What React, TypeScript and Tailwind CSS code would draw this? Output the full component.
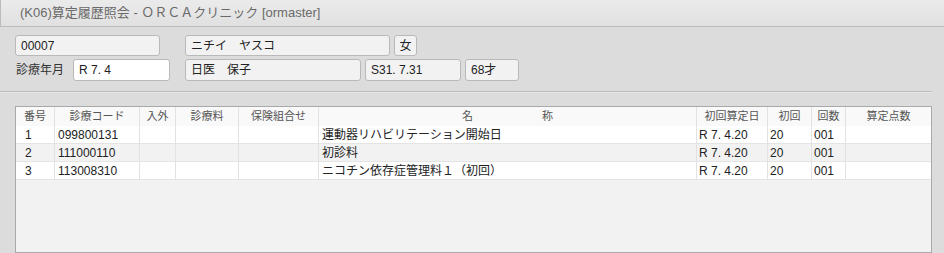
const font = { fontFamily: '"Liberation Sans", "Noto Sans CJK JP", sans-serif' };

const cols = 'grid grid-cols-[39px_85px_36px_63px_80px_378px_71px_44px_34px_1fr]';

const rows = [
  { no: '1', code: '099800131', name: '運動器リハビリテーション開始日', date: 'R 7. 4.20', first: '20', count: '001' },
  { no: '2', code: '111000110', name: '初診料', date: 'R 7. 4.20', first: '20', count: '001' },
  { no: '3', code: '113008310', name: 'ニコチン依存症管理料１（初回）', date: 'R 7. 4.20', first: '20', count: '001' },
];

function Field({ w, value, white }: { w: string; value: string; white?: boolean }) {
  return (
    <div className={`${w} h-full flex items-center px-[5px] rounded-[3px] border border-[#b9b9b9] ${white ? 'bg-white' : 'bg-[#f2f2f2]'} text-[12px] text-[#222] whitespace-pre`}>
      {value}
    </div>
  );
}

export default function App() {
  return (
    <div className="w-[944px] h-[253px] bg-[#dcdcdc] flex flex-col overflow-hidden" style={font}>
      {/* title bar */}
      <div className="h-[27px] shrink-0 flex items-center pl-[19px] bg-gradient-to-b from-[#ebebeb] to-[#e0e0e0] border-b border-l border-[#bcbcbc] text-[13px] text-[#6a6a6a]">
        (K06)算定履歴照会 - ＯＲＣＡクリニック [ormaster]
      </div>

      {/* patient info */}
      <div className="mt-[8px] h-[21px] flex pl-[15px] shrink-0">
        <Field w="w-[145px]" value="00007" />
        <div className="ml-[25px]"><Field w="w-[205px]" value="ニチイ　ヤスコ" /></div>
        <div className="ml-[4px] w-[23px] h-full flex items-center justify-center rounded-[3px] border border-[#b9b9b9] bg-[#f2f2f2] text-[12px] text-[#222]">女</div>
      </div>
      <div className="mt-[3px] h-[22px] flex pl-[16px] shrink-0">
        <div className="w-[57px] flex items-center text-[12px] text-[#333]">診療年月</div>
        <Field w="w-[97px]" value="R 7. 4" white />
        <div className="ml-[15px]"><Field w="w-[176px]" value="日医　保子" /></div>
        <div className="ml-[4px]"><Field w="w-[96px]" value="S31. 7.31" /></div>
        <div className="ml-[4px]"><Field w="w-[54px]" value="68才" /></div>
      </div>

      <div className="mt-[10px] w-[932px] h-[2px] shrink-0 border-t border-[#bdbdbd] border-b border-b-[#e6e6e6]" />

      {/* table */}
      <div className="mt-[13px] ml-[15px] w-[917px] flex-1 flex flex-col border border-[#a9a9a9] bg-[#f2f2f2] text-[12px] text-[#222]">
        <div className={`${cols} h-[19px] bg-[#f9f9f9] text-[11px] text-[#555]`}>
          {['番号', '診療コード', '入外', '診療料', '保険組合せ'].map((h) => (
            <div key={h} className="flex items-center justify-center border-r border-[#e2e2e2]">{h}</div>
          ))}
          <div className="flex items-center justify-center gap-[69px] border-r border-[#e2e2e2]">
            <span>名</span><span>称</span>
          </div>
          {['初回算定日', '初回', '回数'].map((h) => (
            <div key={h} className="flex items-center justify-center border-r border-[#e2e2e2]">{h}</div>
          ))}
          <div className="flex items-center justify-center">算定点数</div>
        </div>
        {rows.map((r, i) => (
          <div key={r.no} className={`${cols} h-[18px] border-b border-[#e4e4e4] ${i % 2 === 1 ? 'bg-[#f2f2f2]' : 'bg-white'}`}>
            <div className="flex items-center pl-[9px] border-r border-[#e2e2e2]">{r.no}</div>
            <div className="flex items-center pl-[3px] border-r border-[#e2e2e2]">{r.code}</div>
            <div className="border-r border-[#e2e2e2]" />
            <div className="border-r border-[#e2e2e2]" />
            <div className="border-r border-[#e2e2e2]" />
            <div className="flex items-center pl-[3px] border-r border-[#e2e2e2]">{r.name}</div>
            <div className="flex items-center pl-[2px] border-r border-[#e2e2e2]">{r.date}</div>
            <div className="flex items-center pl-[2px] border-r border-[#e2e2e2]">{r.first}</div>
            <div className="flex items-center pl-[2px] border-r border-[#e2e2e2]">{r.count}</div>
            <div />
          </div>
        ))}
      </div>
    </div>
  );
}
